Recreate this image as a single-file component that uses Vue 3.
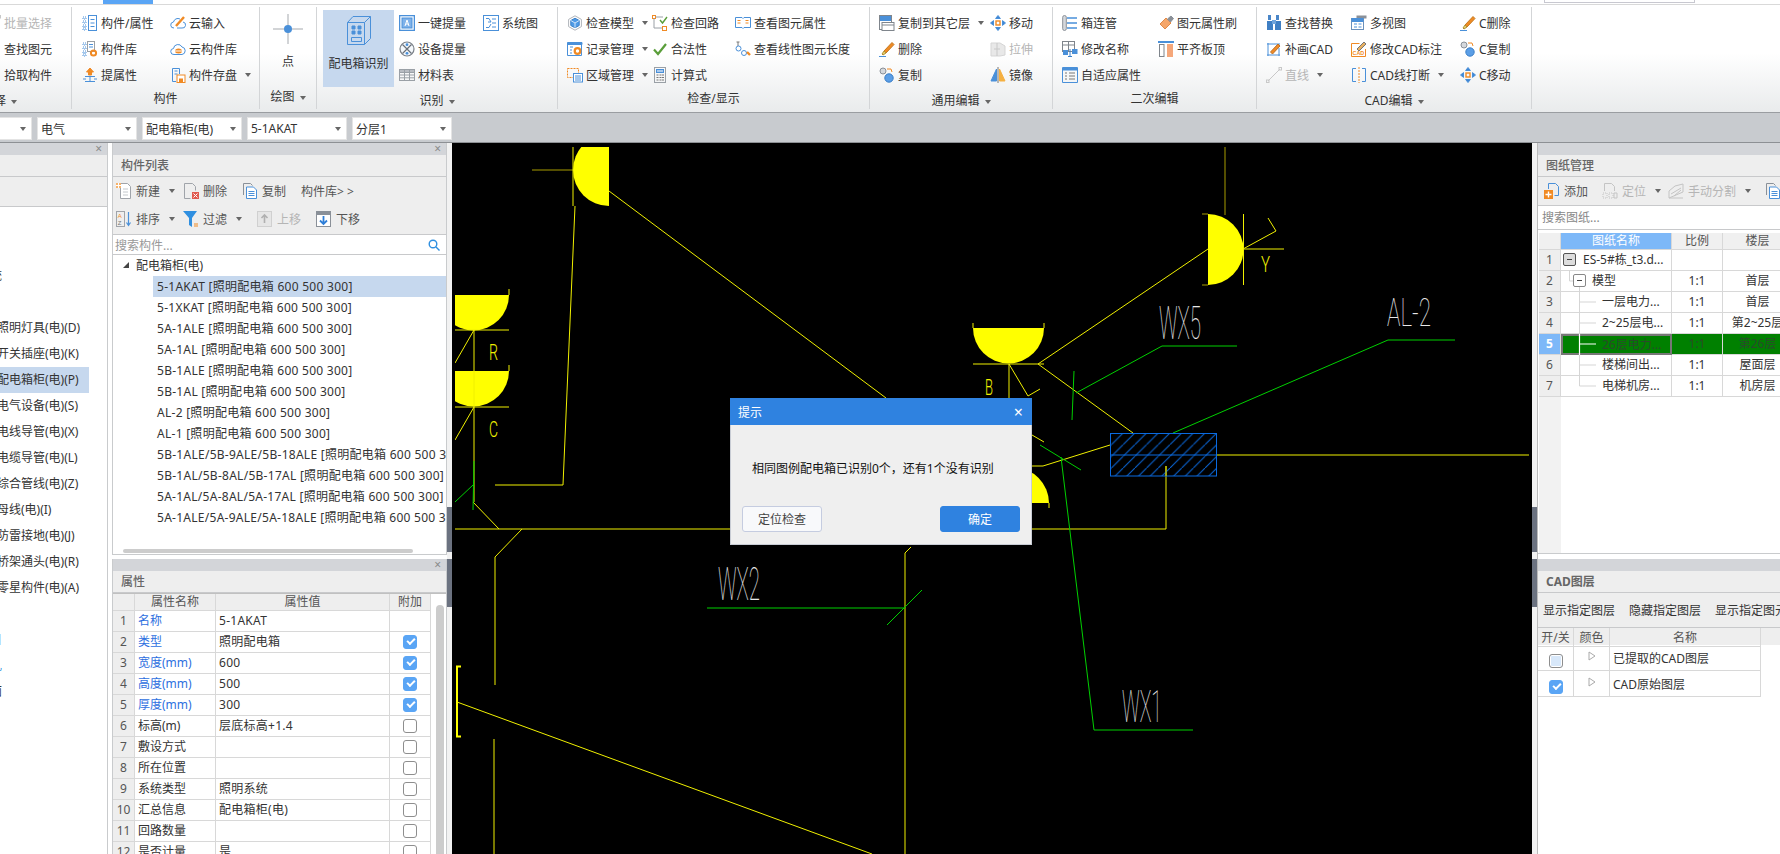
<script setup>
import { ref } from "vue";

const B = "#4a90d9";
const O = "#f08a24";
const G = "#9aa0a6";

// 功能区和面板用到的小图标
const icons = {
  attr: `<path d="M1 2h3v2H1zM1 6h3v2H1zM1 10h3v2H1zM1 13h3v2H1z" stroke-dasharray="1 1"/><rect x="6.5" y=".5" width="8" height="15"/><path d="M8.5 4.5h4M8.5 8h4M8.5 11.5h4"/>`,
  lib: `<path d="M1 2h3v2H1zM1 6h3v2H1zM1 10h3v2H1zM1 13h3v2H1z" stroke-dasharray="1 1"/><rect x="5.5" y=".5" width="7" height="10" stroke="${G}"/><path d="M7 3.5h4M7 6h4"/><circle cx="11.5" cy="12" r="2.6" stroke="${O}" stroke-width="2"/>`,
  up: `<path d="M8 1l3.5 4h-2v3h-3V5h-2z" fill="${O}" stroke="${O}"/><path d="M3 9.5h10M3 14.5h10M8 9v6M1 12h3M12 12h3"/>`,
  cloudin: `<path d="M4 13a3 3 0 0 1-.5-6A4.5 4.5 0 0 1 10 4M13 7a3 3 0 0 1-1 6H7"/><path d="M6 11l8-9" stroke="${O}" stroke-width="2.4"/>`,
  cloudlib: `<path d="M4 13.5a3 3 0 0 1-.5-6A4.5 4.5 0 0 1 12 6a3.8 3.8 0 0 1 0 7.5z"/><ellipse cx="8.5" cy="10" rx="3.5" ry="2.5" fill="${O}" stroke="none"/><path d="M5 10h7" stroke="#fff"/>`,
  save: `<path d="M9.5 7V1.5h-7v13H6"/><path d="M4.5 4h3M4.5 7h3"/><rect x="7" y="8" width="8" height="7.5" stroke="${O}" fill="#fff"/><rect x="9" y="11.5" width="4" height="4" fill="${O}" stroke="none"/>`,
  one: `<rect x=".5" y=".5" width="15" height="15" stroke-width="1.6"/><rect x="3" y="3" width="10" height="10" fill="#7fb2ea"/><path d="M6 11l2-6 2 6M6.8 9h2.4" stroke="#fff"/>`,
  device: `<circle cx="8" cy="8" r="7" stroke="#7a8088" stroke-width="1.2" fill="#f4f8fc"/><path d="M3.5 3.5l9 9M12.5 3.5l-9 9" stroke="#6a7078" stroke-width="1.2"/><circle cx="8" cy="3.7" r="1.4" fill="${B}" stroke="none"/><circle cx="8" cy="12.3" r="1.4" fill="${B}" stroke="none"/>`,
  table: `<rect x=".5" y="2.5" width="15" height="11" stroke="${G}"/><path d="M.5 2.5h15v3H.5z" fill="#b8bcc2" stroke="${G}"/><path d="M5.5 3v10M10.5 3v10M1 8h14M1 10.8h14" stroke="${G}"/>`,
  sys: `<rect x=".5" y=".5" width="15" height="15"/><path d="M3 3.5h3L8 7H5M3 12.5h3l2-3.5M9 4h4M9 8h4M9 12h4"/>`,
  model: `<path d="M8 .8l6.4 3.6v7.2L8 15.2l-6.4-3.6V4.4z" stroke="#b0b4ba"/><path d="M8 3.2l4.2 2.3v5L8 12.8l-4.2-2.3v-5z" fill="#4f9be6" stroke="#3a7fc8"/><path d="M3.8 5.5L8 8l4.2-2.5M8 8v4.8" stroke="#cfe4fa"/>`,
  record: `<path d="M1 1.5h14v2H1z" fill="${B}"/><path d="M.5 1.5h14v13H.5z"/><path d="M3 6h3M3 9h2M3 12h2"/><circle cx="10.5" cy="10" r="2.8" stroke="${O}" stroke-width="2.2"/>`,
  region: `<rect x=".5" y="1.5" width="11" height="9" stroke="${O}" stroke-dasharray="2 1"/><rect x="6.5" y="6.5" width="9" height="8.5" fill="#fff"/><path d="M8 9h6M8 11h6M8 13h6"/>`,
  loop: `<rect x=".5" y=".5" width="3" height="3" stroke="${O}"/><rect x="10.5" y="11.5" width="4" height="4" stroke="${O}"/><path d="M3.5 2H11M2 3.5V13h8" stroke="${G}"/><path d="M8 5l2.5 3L15 2" stroke="#5a9e3a" stroke-width="1.4"/>`,
  check: `<path d="M2 8.5l4 4.5 8-10" stroke="#5a9e3a" stroke-width="2.2"/>`,
  calc: `<rect x="2.5" y=".5" width="11" height="15" stroke="${G}"/><rect x="4.5" y="2.5" width="7" height="3" fill="#a9c9ec" stroke="${B}"/><path d="M4.5 8h2M7.5 8h2M10 8h2M4.5 10.5h2M7.5 10.5h2M10 10.5h2M4.5 13h2M7.5 13h2M10 13h2" stroke="#777"/>`,
  view: `<path d="M.5 2.5H7l1 1 1-1h6.5v10H9l-1 1-1-1H.5z"/><path d="M2.5 5.5h3M2.5 8h3M10.5 5.5h3M10.5 8h3" stroke="${O}" stroke-width="1.2"/>`,
  len: `<path d="M3 1v4M1.5 1h3M13 8v0" stroke="#777"/><circle cx="3.5" cy="7.5" r="2.5"/><circle cx="9" cy="12" r="2.5"/><path d="M12 11l3 3" stroke="${O}" stroke-width="2.4"/>`,
  copyto: `<path d="M.5 .5h12v5H.5z" fill="${B}"/><rect x=".5" y=".5" width="12" height="14" stroke="#7f858c"/><rect x="3" y="7.5" width="12" height="8" fill="#fff" stroke="#7f858c"/><path d="M3 10h12" stroke="#7f858c"/>`,
  del: `<path d="M5 10L13 1.5l2 2L7 12z" fill="${O}" stroke="#c47a20"/><path d="M5 10l2 2-3 2-1-1z" fill="#e8d070" stroke="#b09030"/><path d="M0 15.5h7"/>`,
  stretch: `<path d="M1 2h9l5 3v9l-5 1H1z" fill="#e8e8e8" stroke="#d5d5d5"/><path d="M7 2v13M4 8h6" stroke="#c8c8c8"/>`,
  copy: `<circle cx="4" cy="4" r="3" fill="#d5d8dc" stroke="#8a9098"/><circle cx="10" cy="11" r="4.2" fill="#5b9ee6" stroke="#3a7fc8"/><path d="M8 2h4l1 3" stroke="${O}"/>`,
  move: `<path d="M8 .5l2.4 3H5.6zM8 15.5l2.4-3H5.6zM.5 8l3-2.4v4.8zM15.5 8l-3-2.4v4.8z" fill="#3f86d4"/><rect x="6" y="6" width="4" height="4" stroke="${O}" stroke-width="1.4"/>`,
  mirror: `<path d="M6.5 2v12H1z" fill="#4a90d9"/><path d="M9.5 2v12H15z" fill="#f5b041" stroke="#f5b041"/><path d="M8 0v16" stroke="#777"/>`,
  pipe: `<rect x=".7" y=".5" width="3.6" height="15" rx="1.8" fill="#d5d8dc" stroke="#8a9098"/><path d="M5 3h10M5 8h10M5 13h10" stroke-width="1.3"/>`,
  rename: `<rect x=".5" y=".5" width="12" height="10" stroke="#7f858c"/><path d="M.5 4h12M6.5 1v10" stroke="#7f858c"/><rect x="1" y="9" width="5" height="5" fill="${B}" stroke="none"/><rect x="10" y="8" width="5.5" height="5" fill="${B}" stroke="none"/><path d="M8 8v7.5M6 15.5h4" stroke="#3a7fc8"/>`,
  adapt: `<path d="M.5 .5h15v15H.5z"/><path d="M1 1h14v2H1z" fill="${B}"/><path d="M3 6h2M3 9h2M3 12h2M7 6h6M7 9h6M7 12h6" stroke="#777"/>`,
  brush: `<path d="M2 9l6-6 5 5-6 6z" fill="#f5a66a" stroke="#e08a48"/><path d="M9.5 4l3.5-3 2.5 2.5-3 3.5z" fill="#8a9098" stroke="#8a9098"/>`,
  align: `<path d="M0 1h16" stroke-width="2"/><rect x="1.5" y="3.5" width="4.5" height="12" stroke="#7f858c"/><rect x="9" y="3" width="6" height="13" fill="#f5a77a" stroke="none"/>`,
  find: `<path d="M2 0h3v5H2zM10 0h3v5h-3z" fill="#4a86c8" stroke="none"/><path d="M1 6h6v9H1zM9 6h6v9H9z" fill="#3f7fc4" stroke="none"/><path d="M6 5h4v4H6z" fill="#6fa4dc" stroke="none"/>`,
  draw: `<path d="M1 3h13M2 2v13M1 14h13M13 7v8"/><path d="M4.5 11L12 3l2 2-7.5 8z" fill="${O}" stroke="#b9702a"/>`,
  multi: `<rect x="5.5" y=".5" width="10" height="3" fill="#8a9098" stroke="none"/><rect x=".5" y="3.5" width="12" height="11" fill="#fff" stroke="#6a90bc"/><path d="M1 3.5h11v3H1z" fill="${B}"/><path d="M3 9h3M7.5 9h3M3 12h3M7.5 12h3"/>`,
  cadfix: `<path d="M.5 2.5h8M.5 2.5v13h14V8" stroke="${O}"/><path d="M6 8l7-7 2 2-7 7z" fill="#e8b060" stroke="#777"/><text x="1.5" y="14" font-size="5.4" font-weight="700" fill="${O}" stroke="none" font-family="Liberation Sans">CAD</text>`,
  line: `<path d="M2 14L14 2" stroke="#c8c8c8"/><rect x=".5" y="13" width="2.5" height="2.5" stroke="#c8c8c8"/><rect x="13" y=".5" width="2.5" height="2.5" stroke="#c8c8c8"/>`,
  breakline: `<path d="M5 1.5H1.5v13H5M11 1.5h3.5v13H11"/><path d="M8 0v16" stroke="${O}" stroke-dasharray="2 1"/>`,
  newdoc: `<path d="M4.5 3V.5h7l3 3v12h-10z" stroke="#a0a4aa" fill="#fff"/><path d="M7 6h5M7 9h5M7 12h5" stroke="#c4c8cc"/><path d="M0 0h5v5H0z" fill="#f6b26b" stroke="none"/><path d="M2.5 0v5M0 2.5h5" stroke="#fff"/>`,
  deldoc: `<path d="M1.5 15.5V.5h8l3 3v4" stroke="#a0a4aa"/><path d="M1.5 15.5h6" stroke="#a0a4aa"/><rect x="9" y="9" width="7" height="7" fill="#e05a50" stroke="none"/><path d="M10.5 10.5l4 4M14.5 10.5l-4 4" stroke="#fff"/>`,
  copydoc: `<path d="M1.5 12V.5h7l2 2" stroke="#8a9098"/><path d="M4.5 4h7l3 3v8.5h-10z" fill="#fff"/><path d="M6.5 8.5h6M6.5 10.5h6M6.5 12.5h6"/>`,
  sort: `<rect x=".5" y=".5" width="8" height="15" stroke="#a0a4aa"/><text x="1.8" y="7" font-size="6" fill="${O}" stroke="none" font-family="Liberation Sans">A</text><text x="1.8" y="14" font-size="6" fill="#777" stroke="none" font-family="Liberation Sans">Z</text><path d="M12.5 1v13M10.5 11.5l2 3 2-3" stroke-width="1.2"/>`,
  filter: `<path d="M0 0h14L9 7v9L6 14V7z" fill="#2f8fe0" stroke="none"/><path d="M11 13h4M11 15h4" stroke="${O}"/>`,
  upbox: `<rect x=".5" y=".5" width="14" height="15" fill="#e6e6e6" stroke="#d0d0d0"/><path d="M7.5 12V4M4.5 7l3-3 3 3" stroke="#b0b0b0" stroke-width="1.6"/>`,
  downbox: `<rect x=".5" y=".5" width="14" height="15" fill="#fff" stroke="#8a9098"/><path d="M1 1h13v3H1z" fill="#8a9098" stroke="none"/><path d="M7.5 5v8M4 9.5l3.5 3.5L11 9.5" stroke="#2f7fd8" stroke-width="1.8"/>`,
  add: `<path d="M4.5 6V.5h7l3 3v9h-4"/><rect x="0" y="7" width="9" height="9" fill="${O}" stroke="none"/><path d="M4.5 8.5v6M1.5 11.5h6" stroke="#fff" stroke-width="1.4"/>`,
  locate: `<path d="M2.5 8V.5h7l3 3V8" stroke="#c4c4c4"/><path d="M1 10h4v5H1zM7 10h4v5H7z" stroke="#c4c4c4" stroke-dasharray="1 1"/><path d="M12 10h3v5h-3z" stroke="#c4c4c4"/>`,
  split: `<path d="M1 15V8l6-5 8-2v8l-7 3z" stroke="#c4c4c4"/><path d="M1 15h14M3 11l10-6M6 13l7-6" stroke="#c4c4c4"/>`,
};

// 功能区分组，cols 是每列的宽度
const groups = [
  {
    label: "选择", width: 99, pad: 12, cols: "88px", labelCaret: true, cls: "first",
    items: [
      { t: "批量选择", i: "line", off: true },
      { t: "查找图元", i: "find" },
      { t: "拾取构件", i: "draw" },
    ],
  },
  {
    label: "构件", width: 188, pad: 10, cols: "88px 90px",
    items: [
      { t: "构件/属性", i: "attr" },
      { t: "构件库", i: "lib" },
      { t: "提属性", i: "up" },
      { t: "云输入", i: "cloudin" },
      { t: "云构件库", i: "cloudlib" },
      { t: "构件存盘", i: "save", caret: true },
    ],
  },
  {
    label: "识别", width: 241, pad: 82, cols: "84px 70px", labelCaret: true, big: true,
    items: [
      { t: "一键提量", i: "one" },
      { t: "设备提量", i: "device" },
      { t: "材料表", i: "table" },
      { t: "系统图", i: "sys" },
    ],
  },
  {
    label: "检查/显示", width: 312, pad: 9, cols: "85px 83px 130px",
    items: [
      { t: "检查模型", i: "model", caret: true },
      { t: "记录管理", i: "record", caret: true },
      { t: "区域管理", i: "region", caret: true },
      { t: "检查回路", i: "loop" },
      { t: "合法性", i: "check" },
      { t: "计算式", i: "calc" },
      { t: "查看图元属性", i: "view" },
      { t: "查看线性图元长度", i: "len" },
    ],
  },
  {
    label: "通用编辑", width: 183, pad: 9, cols: "111px 60px", labelCaret: true,
    items: [
      { t: "复制到其它层", i: "copyto", caret: true },
      { t: "删除", i: "del" },
      { t: "复制", i: "copy" },
      { t: "移动", i: "move" },
      { t: "拉伸", i: "stretch", off: true },
      { t: "镜像", i: "mirror" },
    ],
  },
  {
    label: "二次编辑", width: 204, pad: 9, cols: "96px 90px",
    items: [
      { t: "箱连管", i: "pipe" },
      { t: "修改名称", i: "rename" },
      { t: "自适应属性", i: "adapt" },
      { t: "图元属性刷", i: "brush" },
      { t: "平齐板顶", i: "align" },
    ],
  },
  {
    label: "CAD编辑", width: 275, pad: 9, cols: "85px 109px 70px", labelCaret: true,
    items: [
      { t: "查找替换", i: "find" },
      { t: "补画CAD", i: "draw" },
      { t: "直线", i: "line", off: true, caret: true },
      { t: "多视图", i: "multi" },
      { t: "修改CAD标注", i: "cadfix" },
      { t: "CAD线打断", i: "breakline", caret: true },
      { t: "C删除", i: "del" },
      { t: "C复制", i: "copy" },
      { t: "C移动", i: "move" },
    ],
  },
];

const combos = ["", "电气", "配电箱柜(电)", "5-1AKAT", "分层1"];

const navItems = [
  "照明灯具(电)(D)", "开关插座(电)(K)", "配电箱柜(电)(P)", "电气设备(电)(S)", "电线导管(电)(X)",
  "电缆导管(电)(L)", "综合管线(电)(Z)", "母线(电)(I)", "防雷接地(电)(J)", "桥架通头(电)(R)", "零星构件(电)(A)",
];

const box = "[照明配电箱 600 500 300]";
const parts = [
  "5-1AKAT", "5-1XKAT", "5A-1ALE", "5A-1AL", "5B-1ALE", "5B-1AL", "AL-2", "AL-1",
  "5B-1ALE/5B-9ALE/5B-18ALE", "5B-1AL/5B-8AL/5B-17AL", "5A-1AL/5A-8AL/5A-17AL", "5A-1ALE/5A-9ALE/5A-18ALE",
].map((n) => `${n} ${box}`);

const props = [
  ["名称", "5-1AKAT", null, true],
  ["类型", "照明配电箱", true, true],
  ["宽度(mm)", "600", true, true],
  ["高度(mm)", "500", true, true],
  ["厚度(mm)", "300", true, true],
  ["标高(m)", "层底标高+1.4", false],
  ["敷设方式", "", false],
  ["所在位置", "", false],
  ["系统类型", "照明系统", false],
  ["汇总信息", "配电箱柜(电)", false],
  ["回路数量", "", false],
  ["是否计量", "是", false],
];

const sheets = [
  { name: "ES-5#栋_t3.d...", scale: "", floor: "", level: 0 },
  { name: "模型", scale: "1:1", floor: "首层", level: 1 },
  { name: "一层电力...", scale: "1:1", floor: "首层", level: 2 },
  { name: "2~25层电...", scale: "1:1", floor: "第2~25层", level: 2 },
  { name: "26层电力...", scale: "1:1", floor: "第26层", level: 2, active: true },
  { name: "楼梯间出...", scale: "1:1", floor: "屋面层", level: 2 },
  { name: "电梯机房...", scale: "1:1", floor: "机房层", level: 2 },
];

const dialogOpen = ref(true);

// 画布上的线，坐标直接用页面坐标
const yellow = [
  "M573 147V206", "M575 206L563 485H495", "M609 191L886 398", "M474 330V502", "M455 330H509",
  "M474 330L455 363", "M455 407H509", "M474 407L455 440", "M509 289V295", "M509 365V371",
  "M473 502L499 529", "M455 529H1166V466", "M522 529L495 557V685", "M494 739V854", "M457 702L872 854",
  "M911 547L905 553V854", "M1208 249L1038 364L1133 433", "M973 364H1044", "M1009 364V398", "M1009 364L1028 396L1040 389",
  "M973 323V328", "M1044 323V328", "M1243.5 214V285", "M1243 249H1284", "M1243 249L1276 231L1268 218",
  "M1217 455H1529", "M1110 445L1043 466H1032", "M1032 435L1044 442", "M1049 503V508",
];
const olive = ["M532 170H573", "M1225 147V215", "M1202 214H1208", "M1202 285H1208"];
const green = [
  "M455 502L473 485", "M474 461L473 510", "M707 608H905", "M887 625L922 590", "M1074 371L1072 420",
  "M1076 393L1162 346H1237", "M1173 433L1388 340H1455", "M1040 445L1081 470", "M1061 457L1094 730H1193",
];
const cadLabels = [
  { t: "WX2", x: 718, y: 600, w: 42, fs: 46 },
  { t: "WX5", x: 1159, y: 339, w: 42, fs: 46 },
  { t: "AL-2", x: 1387, y: 326, w: 44, fs: 38 },
  { t: "WX1", x: 1122, y: 722, w: 40, fs: 44 },
];
const lampLabels = [
  { t: "R", x: 489, y: 360, w: 9 },
  { t: "C", x: 489, y: 437, w: 9 },
  { t: "B", x: 985, y: 395, w: 8 },
  { t: "Y", x: 1261, y: 272, w: 9 },
];
</script>

<template>
  <div class="app">
    <div class="tabstrip"><span class="tab-on"></span><span class="top-input"></span></div>

    <div class="ribbon">
      <template v-for="(g, gi) in groups" :key="g.label">
        <section class="group" :class="g.cls" :style="{ width: g.width + 'px' }">
          <div class="group-body" :style="{ paddingLeft: g.pad + 'px', gridTemplateColumns: g.cols }">
            <div v-if="g.big" class="big-btn">
              <svg width="24" height="29" viewBox="0 0 24 29" fill="none" stroke="#4a90d9">
                <path d="M.5 6.5h17v22H.5zM.5 6.5L6 .5h17.5v22l-6 6M17.5 6.5L23.5 .5"/>
                <path d="M5 10h3v3H5zM11 10h3v3h-3zM5 15h3v3H5zM11 15h3v3h-3z" fill="#4a90d9"/>
                <path d="M4.5 21.5h10v4h-10z"/>
              </svg>
              <span>配电箱识别</span>
            </div>
            <div v-for="it in g.items" :key="it.t" class="rb-item" :class="{ off: it.off }">
              <svg class="ic" viewBox="0 0 16 16" v-html="icons[it.i]"></svg>
              <span>{{ it.t }}</span>
              <i v-if="it.caret" class="caret"></i>
            </div>
          </div>
          <div class="group-label" :class="{ 'has-caret': g.labelCaret }">
            {{ g.label }}<i v-if="g.labelCaret" class="caret"></i>
          </div>
        </section>
        <section v-if="gi === 1" class="group draw-group">
          <svg width="30" height="30" viewBox="0 0 30 30" fill="none" stroke="#a5a9ae">
            <path d="M0 15h30M15 0v30"/>
            <circle cx="15" cy="15" r="4" fill="#4a90d9" stroke="none"/>
          </svg>
          <span class="point">点</span>
          <div class="group-label has-caret">绘图<i class="caret"></i></div>
        </section>
      </template>
    </div>

    <div class="combobar">
      <div v-for="(c, i) in combos" :key="i" class="combo" :class="{ cut: i === 0 }">
        <span>{{ c }}</span><i class="caret"></i>
      </div>
    </div>

    <div class="main">
      <!-- 左侧导航 -->
      <aside class="nav">
        <div class="pane-title"><span>×</span></div>
        <div class="pane-head"></div>
        <div class="nav-tool"></div>
        <div class="nav-list">
          <div class="nav-row cut">统</div>
          <div class="nav-row"></div>
          <div v-for="n in navItems" :key="n" class="nav-row" :class="{ on: n.startsWith('配电箱柜') }">{{ n }}</div>
          <div class="nav-row"></div>
          <div class="nav-row cut">目</div>
          <div class="nav-row cut blue">乱</div>
          <div class="nav-row cut">面</div>
        </div>
      </aside>

      <!-- 构件列表和属性 -->
      <div class="mid">
        <section class="pane list-pane">
          <div class="pane-title"><span>×</span></div>
          <div class="pane-head">构件列表</div>
          <div class="tools">
            <div class="tool-row">
              <div class="tool"><svg class="ic" viewBox="0 0 16 16" v-html="icons.newdoc"></svg>新建<i class="caret tight"></i></div>
              <div class="tool"><svg class="ic" viewBox="0 0 16 16" v-html="icons.deldoc"></svg>删除</div>
              <div class="tool"><svg class="ic" viewBox="0 0 16 16" v-html="icons.copydoc"></svg>复制</div>
              <div class="tool">构件库&gt; &gt;</div>
            </div>
            <div class="tool-row">
              <div class="tool"><svg class="ic" viewBox="0 0 16 16" v-html="icons.sort"></svg>排序<i class="caret tight"></i></div>
              <div class="tool"><svg class="ic" viewBox="0 0 16 16" v-html="icons.filter"></svg>过滤<i class="caret"></i></div>
              <div class="tool off"><svg class="ic" viewBox="0 0 16 16" v-html="icons.upbox"></svg>上移</div>
              <div class="tool"><svg class="ic" viewBox="0 0 16 16" v-html="icons.downbox"></svg>下移</div>
            </div>
          </div>
          <div class="search">
            <span>搜索构件...</span>
            <svg width="12" height="12" viewBox="0 0 12 12" fill="none" stroke="#2f8fe0" stroke-width="1.4">
              <circle cx="5" cy="5" r="3.8"/><path d="M8 8l3.5 3.5"/>
            </svg>
          </div>
          <div class="tree">
            <div class="tree-root"><i class="tri"></i>配电箱柜(电)</div>
            <div v-for="(p, i) in parts" :key="p" class="tree-row" :class="{ on: i === 0 }">{{ p }}</div>
          </div>
          <div class="hthumb"></div>
        </section>

        <section class="pane prop-pane">
          <div class="pane-title"><span>×</span></div>
          <div class="pane-head">属性</div>
          <div class="prop-body">
            <div class="prop-table">
              <div class="prop-row head">
                <div></div><div>属性名称</div><div>属性值</div><div>附加</div>
              </div>
              <div v-for="(p, i) in props" :key="p[0]" class="prop-row">
                <div class="num">{{ i + 1 }}</div>
                <div class="pname" :class="{ blue: p[3] }">{{ p[0] }}</div>
                <div class="pval">{{ p[1] }}</div>
                <div class="pchk">
                  <i v-if="p[2] !== null" class="chk" :class="{ checked: p[2] }"></i>
                </div>
              </div>
            </div>
            <div class="vthumb"></div>
          </div>
        </section>
      </div>

      <div class="gutter"><i></i><i></i></div>

      <!-- CAD 画布 -->
      <div class="canvas">
        <svg class="cad" width="1080" height="711" viewBox="452 143 1080 711" fill="none">
          <defs>
            <clipPath id="cadclip"><rect x="455" y="147" width="1074" height="707"/></clipPath>
            <pattern id="hatch" width="11.7" height="11.7" patternUnits="userSpaceOnUse">
              <path d="M-1 12.7L12.7 -1" stroke="#0a66d8" stroke-width="1"/>
            </pattern>
          </defs>
          <g clip-path="url(#cadclip)">
            <g fill="#ff0">
              <path d="M609 147V206A36 36 0 0 1 609 134Z"/>
              <path d="M438 295H509A35.5 35.5 0 0 1 438 295Z"/>
              <path d="M438 371H509A35.5 35.5 0 0 1 438 371Z"/>
              <path d="M973 328H1044A35.5 35.5 0 0 1 973 328Z"/>
              <path d="M1208 214V285A35.5 35.5 0 0 0 1208 214Z"/>
              <path d="M978 503H1049A35.5 35.5 0 0 0 978 503Z"/>
            </g>
            <path d="M461 666.5H457V736.5H461" stroke="#ff0" stroke-width="2"/>
            <path v-for="d in olive" :key="d" :d="d" stroke="#a89c00"/>
            <path v-for="d in yellow" :key="d" :d="d" stroke="#f0f000"/>
            <path v-for="d in green" :key="d" :d="d" stroke="#00d000"/>
            <rect x="1110.5" y="433.5" width="106" height="42.5" fill="url(#hatch)" stroke="#0a6ae0"/>
            <path d="M1110 455H1217" stroke="#0a6ae0"/>
            <path d="M1166 466V476" stroke="#d8d800"/>
            <text v-for="l in cadLabels" :key="l.t" class="cad-text" :x="l.x" :y="l.y" :font-size="l.fs" :textLength="l.w" lengthAdjust="spacingAndGlyphs">{{ l.t }}</text>
            <text v-for="l in lampLabels" :key="l.t" class="lamp-text" :x="l.x" :y="l.y" font-size="22" :textLength="l.w" lengthAdjust="spacingAndGlyphs">{{ l.t }}</text>
          </g>
        </svg>

        <div v-if="dialogOpen" class="dialog">
          <div class="dlg-title"><span>提示</span><b>×</b></div>
          <div class="dlg-msg">相同图例配电箱已识别0个，还有1个没有识别</div>
          <div class="dlg-btns">
            <button class="btn">定位检查</button>
            <button class="btn primary">确定</button>
          </div>
        </div>
      </div>

      <div class="gutter"><i></i><i></i></div>

      <!-- 图纸管理和 CAD 图层 -->
      <aside class="right">
        <section class="pane sheet-pane">
          <div class="pane-title"></div>
          <div class="pane-head">图纸管理</div>
          <div class="tool-row single">
            <div class="tool"><svg class="ic" viewBox="0 0 16 16" v-html="icons.add"></svg>添加</div>
            <div class="tool off"><svg class="ic" viewBox="0 0 16 16" v-html="icons.locate"></svg>定位<i class="caret tight"></i></div>
            <div class="tool off"><svg class="ic" viewBox="0 0 16 16" v-html="icons.split"></svg>手动分割<i class="caret"></i></div>
            <div class="tool"><svg class="ic" viewBox="0 0 16 16" v-html="icons.copydoc"></svg></div>
          </div>
          <div class="sheet-search">搜索图纸...</div>
          <div class="sheet">
            <div class="sheet-row head">
              <div></div><div class="sel">图纸名称</div><div>比例</div><div>楼层</div>
            </div>
            <div v-for="(s, i) in sheets" :key="s.name" class="sheet-row" :class="{ active: s.active }">
              <div class="num">{{ i + 1 }}</div>
              <div class="sname" :class="'lv' + s.level">
                <i v-if="s.level < 2" class="fold" :class="{ root: s.level === 0 }"></i>{{ s.name }}
              </div>
              <div>{{ s.scale }}</div>
              <div class="floor">{{ s.floor }}</div>
            </div>
            <svg class="tree-lines" width="40" height="147" viewBox="0 0 40 147" fill="none" stroke="#d5d5d5">
              <path d="M8.5 20V31H12M18.5 37V84M18.5 105V136M18.5 52H35M18.5 73H35M18.5 115H35M18.5 136H35"/>
              <path d="M18.5 84V105M18.5 94H35" stroke="#fff" stroke-width="1.2"/>
            </svg>
          </div>
        </section>

        <section class="pane layer-pane">
          <div class="pane-title"></div>
          <div class="pane-head strong">CAD图层</div>
          <div class="layer-tools">
            <span>显示指定图层</span><span>隐藏指定图层</span><span>显示指定图元</span>
          </div>
          <div class="layer-table">
            <div class="layer-row head"><div>开/关</div><div>颜色</div><div>名称</div></div>
            <div class="layer-row">
              <div><i class="chk part"></i></div>
              <div><svg class="play" width="8" height="10" viewBox="0 0 8 10" fill="#fff" stroke="#aaa"><path d="M1 1v8l6-4z"/></svg></div>
              <div class="lname">已提取的CAD图层</div>
            </div>
            <div class="layer-row">
              <div><i class="chk checked"></i></div>
              <div><svg class="play" width="8" height="10" viewBox="0 0 8 10" fill="#fff" stroke="#aaa"><path d="M1 1v8l6-4z"/></svg></div>
              <div class="lname">CAD原始图层</div>
            </div>
          </div>
        </section>
      </aside>
    </div>
  </div>
</template>

<style scoped>
.app {
  width: 1780px;
  height: 854px;
  overflow: hidden;
  display: flex;
  flex-direction: column;
  font-family: "Noto Sans", "Noto Sans CJK SC", sans-serif;
  font-size: 12px;
  color: #333;
  background: #fff;
}

.tabstrip {
  height: 4px;
  border-bottom: 1px solid #d9d9d9;
  flex: none;
  box-sizing: content-box;
  display: flex;
  overflow: hidden;
}
.tab-on {
  display: block;
  width: 50px;
  height: 4px;
  margin-left: 103px;
  background: #5aa5f5;
}
.top-input {
  display: block;
  width: 149px;
  height: 2px;
  margin-left: 1391px;
  border: 1px solid #c8c8d0;
  border-top: none;
}

/* 功能区 */
.ribbon {
  height: 108px;
  flex: none;
  display: flex;
  overflow: hidden;
  background: linear-gradient(#fff 45%, #e9ebec);
  border-bottom: 1px solid #9a9da1;
  box-sizing: border-box;
}
.group {
  flex: none;
  height: 102px;
  margin-top: 2px;
  border-right: 1px solid #d3d5d7;
  box-sizing: border-box;
  position: relative;
  display: flex;
  flex-direction: column;
}
.group.first {
  margin-left: -27px;
}
.group.first .group-label {
  padding-right: 45px;
}
.group-body {
  height: 78px;
  margin-top: 3px;
  display: grid;
  grid-auto-flow: column;
  grid-template-rows: repeat(3, 26px);
  flex: none;
}
.rb-item {
  display: flex;
  align-items: center;
  gap: 3px;
  white-space: nowrap;
}
.rb-item.off {
  color: #b5b5b5;
}
.ic {
  width: 16px;
  height: 16px;
  flex: none;
  fill: none;
  stroke: #4a90d9;
}
.caret {
  display: inline-block;
  width: 0;
  height: 0;
  margin-left: 5px;
  border-top: 4px solid #666;
  border-left: 3.5px solid transparent;
  border-right: 3.5px solid transparent;
  vertical-align: middle;
}
.caret.tight {
  margin-right: -7px;
}
.group-label {
  height: 20px;
  line-height: 20px;
  text-align: center;
  margin-top: 1px;
}
.group-label.has-caret {
  margin-top: 3px;
}
.big-btn {
  position: absolute;
  left: 6px;
  top: 3px;
  width: 71px;
  height: 77px;
  background: #c6d8ee;
  display: flex;
  flex-direction: column;
  align-items: center;
  padding-top: 6px;
  box-sizing: border-box;
  gap: 9px;
}
.draw-group {
  width: 57px;
  align-items: center;
  padding-top: 7px;
}
.point {
  margin-top: 8px;
  margin-bottom: 14px;
}

/* 下拉框条 */
.combobar {
  height: 30px;
  flex: none;
  display: flex;
  gap: 5px;
  padding-top: 4px;
  box-sizing: border-box;
  background: #c8cbcf;
  border-bottom: 1px solid #8d9094;
  margin-left: -68px;
}
.combo {
  width: 100px;
  height: 23px;
  background: #fff;
  border: 1px solid #e4e4e4;
  box-sizing: border-box;
  display: flex;
  align-items: center;
  justify-content: space-between;
  padding: 0 5px 0 3px;
  white-space: nowrap;
}

/* 主区域 */
.main {
  height: 711px;
  flex: none;
  display: flex;
  overflow: hidden;
}
.pane-title {
  height: 12px;
  flex: none;
  background: #d3d5d9;
  text-align: right;
  line-height: 12px;
  font-size: 12px;
  color: #8a8a8a;
  padding-right: 5px;
}
.pane-head {
  height: 22px;
  flex: none;
  line-height: 21px;
  padding-left: 8px;
  background: #eee;
  color: #666;
  border-bottom: 1px solid #c8c9cb;
  box-sizing: border-box;
  font-weight: 500;
}
.pane-head.strong {
  font-weight: 700;
}

.nav {
  width: 108px;
  flex: none;
  border-right: 1px solid #c9cbcd;
  box-sizing: border-box;
  overflow: hidden;
}
.nav-tool {
  height: 29px;
  background: #eee;
  border-bottom: 1px solid #c8c9cb;
}
.nav-list {
  padding-top: 56px;
}
.nav-row {
  height: 26px;
  line-height: 26px;
  margin-left: -3px;
  white-space: nowrap;
}
.nav-row.on {
  width: 92px;
  background: #c6d8ee;
}
.nav-row.cut {
  margin-left: -10px;
}
.nav-row.blue {
  color: #2f8fe0;
}

.mid {
  width: 339px;
  flex: none;
  padding-left: 4px;
  box-sizing: border-box;
  display: flex;
  flex-direction: column;
}
.pane {
  display: flex;
  flex-direction: column;
  overflow: hidden;
}
.list-pane {
  height: 412px;
  flex: none;
  border: 1px solid #c9cbcd;
  border-top: none;
  box-sizing: border-box;
}
.tools {
  height: 58px;
  flex: none;
  background: #eee;
  border-bottom: 1px solid #c8c9cb;
  box-sizing: border-box;
}
.tool-row {
  height: 28px;
  display: flex;
  align-items: center;
  gap: 15px;
  padding-left: 3px;
  color: #555;
}
.tool-row.single {
  height: 29px;
  flex: none;
  background: #eee;
  gap: 14px;
  padding-left: 6px;
  border-bottom: 1px solid #c8c9cb;
  box-sizing: border-box;
}
.tool {
  display: flex;
  align-items: center;
  gap: 4px;
  white-space: nowrap;
}
.tool.off {
  color: #b5b5b5;
}
.search {
  height: 19px;
  flex: none;
  display: flex;
  align-items: center;
  justify-content: space-between;
  padding: 0 6px 0 2px;
  color: #999;
  border-bottom: 1px solid #c8c9cb;
}
.tree {
  flex: 1;
  overflow: hidden;
}
.tree-root {
  height: 21px;
  line-height: 21px;
  padding-left: 23px;
  position: relative;
}
.tri {
  position: absolute;
  left: 10px;
  top: 7px;
  border-bottom: 6px solid #444;
  border-left: 6px solid transparent;
}
.tree-row {
  height: 21px;
  line-height: 21px;
  margin-left: 40px;
  padding-left: 4px;
  white-space: nowrap;
  overflow: hidden;
  letter-spacing: 0.27px;
}
.tree-row.on {
  background: #c6d8ee;
}
.hthumb {
  width: 290px;
  height: 4px;
  flex: none;
  margin: 0 0 1px 10px;
  background: #ccc;
  border-radius: 2px;
}

.prop-pane {
  margin-top: 4px;
  flex: 1;
  border-left: 1px solid #c9cbcd;
  border-right: 1px solid #c9cbcd;
  box-sizing: border-box;
}
.prop-body {
  flex: 1;
  display: flex;
  border-top: 1px solid #c0c0c0;
}
.prop-table {
  width: 318px;
  flex: none;
}
.prop-row {
  display: grid;
  grid-template-columns: 22px 81px 174px 41px;
  height: 21px;
}
.prop-row > div {
  border-right: 1px solid #d8d8d8;
  border-bottom: 1px solid #d8d8d8;
  box-sizing: border-box;
  line-height: 20px;
  white-space: nowrap;
  overflow: hidden;
}
.prop-row.head {
  height: 17px;
}
.prop-row.head > div {
  background: #eee;
  text-align: center;
  line-height: 16px;
  color: #555;
}
.num {
  background: #eee;
  text-align: center;
  color: #555;
}
.pname {
  padding-left: 3px;
}
.pname.blue {
  color: #2d6fe0;
}
.pval {
  padding-left: 3px;
  letter-spacing: 0.27px;
}
.pchk {
  display: flex;
  align-items: center;
  justify-content: center;
}
.vthumb {
  width: 8px;
  flex: none;
  margin: 11px 0 0 5px;
  background: #ccc;
  border-radius: 4px;
}
.chk {
  display: block;
  width: 14px;
  height: 14px;
  box-sizing: border-box;
  border: 1px solid #8e8e8e;
  border-radius: 3px;
  background: #fff;
  position: relative;
}
.chk.checked {
  background: #5aa5f5;
  border-color: #5aa5f5;
}
.chk.checked::after {
  content: "";
  position: absolute;
  left: 3px;
  top: 2px;
  width: 6px;
  height: 3px;
  border-left: 2px solid #fff;
  border-bottom: 2px solid #fff;
  transform: rotate(-45deg);
}
.chk.part {
  background: #d8e8fa;
  box-shadow: inset 0 0 0 1px #fff;
}

.gutter {
  width: 5px;
  flex: none;
  background: #f2f2f2;
  display: flex;
  flex-direction: column;
}
.gutter i {
  display: block;
  height: 45px;
  margin-top: 364px;
  background: #6b7280;
}
.gutter i + i {
  height: 48px;
  margin-top: 7px;
}

.canvas {
  width: 1080px;
  flex: none;
  background: #000;
  position: relative;
  overflow: hidden;
}
.cad {
  display: block;
}
.cad-text {
  fill: #e8e8e8;
  font-family: Roboto, "Liberation Sans", sans-serif;
  font-weight: 100;
}
.lamp-text {
  fill: #f0f000;
  font-family: Roboto, "Liberation Sans", sans-serif;
  font-weight: 300;
}

/* 提示框 */
.dialog {
  position: absolute;
  left: 278px;
  top: 255px;
  width: 302px;
  height: 147px;
  background: #efefef;
  border: 1px solid #c8ccd4;
  border-top: none;
  box-sizing: border-box;
  display: flex;
  flex-direction: column;
}
.dlg-title {
  height: 27px;
  flex: none;
  margin: 0 -1px;
  background: #2f82e0;
  color: #fff;
  display: flex;
  align-items: center;
  justify-content: space-between;
  padding: 0 9px 0 8px;
}
.dlg-title b {
  font-size: 16px;
  font-weight: 400;
  line-height: 1;
}
.dlg-msg {
  margin: 35px 0 0 21px;
  height: 18px;
  line-height: 18px;
  color: #111;
}
.dlg-btns {
  margin-top: 28px;
  padding: 0 11px;
  display: flex;
  justify-content: space-between;
}
.btn {
  width: 80px;
  height: 26px;
  font: inherit;
  color: #444;
  background: #f8f9fb;
  border: 1px solid #c5cce0;
  border-radius: 3px;
}
.btn.primary {
  background: #2f82e0;
  border-color: #2f82e0;
  color: #fff;
}

/* 右侧面板 */
.right {
  width: 243px;
  flex: none;
  border-left: 1px solid #bbb;
  box-sizing: border-box;
  display: flex;
  flex-direction: column;
  overflow: hidden;
}
.sheet-pane {
  height: 411px;
  flex: none;
  border-bottom: 1px solid #c9cbcd;
  box-sizing: border-box;
}
.sheet-search {
  height: 24px;
  flex: none;
  line-height: 23px;
  padding-left: 4px;
  color: #888;
  border-bottom: 1px solid #c8c9cb;
  box-sizing: border-box;
}
.sheet {
  flex: 1;
  margin: 3px 0 0 1px;
  background: linear-gradient(to right, #f2f2f2 22px, #fff 22px);
  position: relative;
  overflow: hidden;
}
.sheet-row {
  display: grid;
  grid-template-columns: 22px 111px 51px 70px;
  height: 21px;
}
.sheet-row > div {
  border-right: 1px solid #d8d8d8;
  border-bottom: 1px solid #d8d8d8;
  box-sizing: border-box;
  text-align: center;
  line-height: 20px;
  white-space: nowrap;
  overflow: hidden;
}
.sheet-row.head {
  height: 17px;
}
.sheet-row.head > div {
  background: #f0f0f0;
  line-height: 16px;
  color: #555;
}
.sheet-row.head > .sel {
  background: #7db8f8;
  color: #fff;
}
.sheet-row .sname {
  text-align: left;
  position: relative;
}
.sname.lv0 { padding-left: 22px; }
.sname.lv1 { padding-left: 31px; }
.sname.lv2 { padding-left: 41px; }
.fold {
  position: absolute;
  top: 3px;
  left: 12px;
  width: 13px;
  height: 13px;
  box-sizing: border-box;
  border: 1px solid #888;
  border-radius: 2px;
  background: #fff;
}
.fold.root {
  left: 2px;
  background: #ddd;
  border-color: #555;
}
.fold::after {
  content: "";
  position: absolute;
  left: 3px;
  top: 5px;
  width: 5px;
  height: 1px;
  background: #444;
}
.sheet-row.active > div {
  background: #008000;
  color: #2a4a2a;
  border-color: #d8d8d8;
}
.sheet-row.active > .num {
  background: #7db8f8;
  color: #fff;
  font-weight: 700;
}
.sheet-row.active > .sname {
  border: 2px solid #777;
  padding-left: 39px;
  line-height: 17px;
}
.tree-lines {
  position: absolute;
  left: 22px;
  top: 17px;
}
.layer-pane {
  margin-top: 5px;
  flex: 1;
}
.layer-tools {
  height: 35px;
  flex: none;
  display: flex;
  align-items: center;
  gap: 14px;
  padding-left: 5px;
  background: #eee;
  border-bottom: 1px solid #c8c9cb;
  white-space: nowrap;
  box-sizing: border-box;
}
.layer-table {
  background: linear-gradient(#eee 17px, #fff 17px);
}
.layer-row {
  display: grid;
  grid-template-columns: 36px 36px 151px;
  height: 26px;
}
.layer-row > div {
  border-right: 1px solid #d8d8d8;
  border-bottom: 1px solid #d8d8d8;
  box-sizing: border-box;
  display: flex;
  align-items: center;
  justify-content: center;
  white-space: nowrap;
}
.layer-row .chk {
  margin-top: 6px;
}
.layer-row.head {
  height: 17px;
  color: #555;
}
.layer-row > .lname {
  justify-content: flex-start;
  padding-left: 3px;
}
.play {
  display: block;
  margin-top: -3px;
}
</style>

<style>
html,
body {
  margin: 0;
  overflow: hidden;
  background: #fff;
}
</style>
